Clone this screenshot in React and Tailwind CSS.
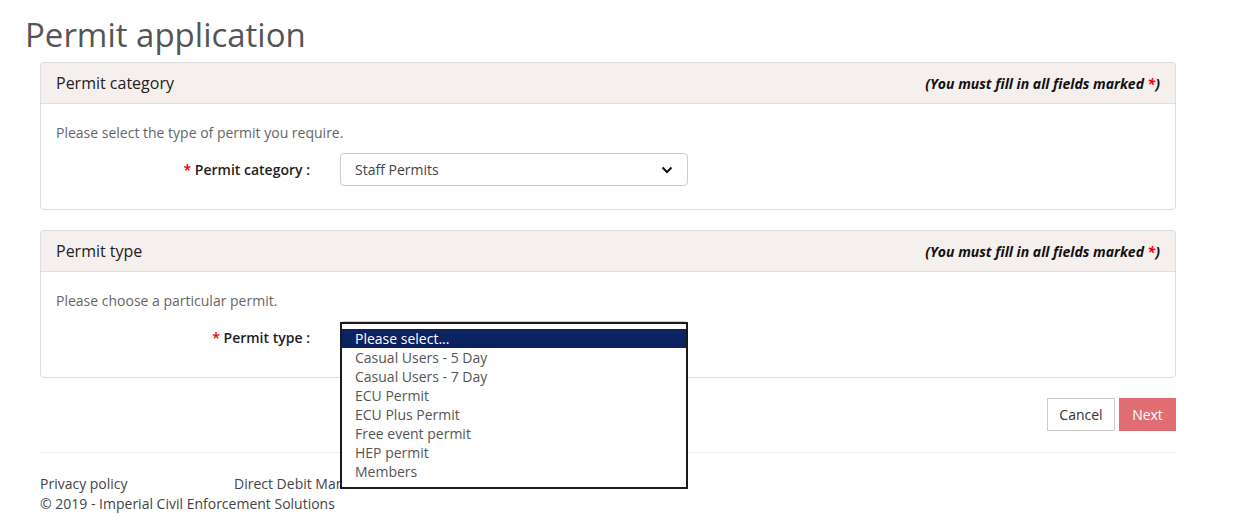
import React from "react";

function Panel({ title, desc, label, selectEl }) {
  return (
    <div className="border border-[#dddddd] rounded-[4px] bg-white">
      <div className="h-[41px] bg-[#f5f0ee] border-b border-[#dddddd] rounded-t-[4px] flex items-center justify-between px-[15px]">
        <span className="text-[16px] text-[#222]">{title}</span>
        <span className="text-[14px] font-bold italic text-[#111]">
          (You must fill in all fields marked <span className="text-[#e00]">*</span>)
        </span>
      </div>
      <div className="px-[15px] pt-[19px] pb-[23px]">
        <div className="text-[14px] leading-[20px] text-[#666]">{desc}</div>
        <div className="flex items-center mt-[10px]">
          <div className="w-[254px] text-right text-[14px] font-semibold text-[#222]">
            <span className="text-[#e00]">*</span> {label} :
          </div>
          <div className="ml-[30px] relative">{selectEl}</div>
        </div>
      </div>
    </div>
  );
}

export default function App() {
  const opts = [
    "Casual Users - 5 Day",
    "Casual Users - 7 Day",
    "ECU Permit",
    "ECU Plus Permit",
    "Free event permit",
    "HEP permit",
    "Members",
  ];
  return (
    <div className="w-[1242px] h-[516px] bg-white overflow-hidden font-['Open_Sans',sans-serif]">
      <h1 className="pl-[25px] pt-[12px] text-[33px] leading-[46px] text-[#555] font-normal">Permit application</h1>
      <div className="ml-[40px] w-[1136px] mt-[4px]">
        <Panel
          title="Permit category"
          desc="Please select the type of permit you require."
          label="Permit category"
          selectEl={
            <div className="w-[348px] h-[33px] border border-[#cccccc] rounded-[4px] flex items-center justify-between pl-[14px] pr-[14px] text-[14px] text-[#444]">
              <span>Staff Permits</span>
              <svg width="12" height="8" viewBox="0 0 12 8" fill="none">
                <path d="M1.5 1.5L6 6L10.5 1.5" stroke="#111" strokeWidth="2" />
              </svg>
            </div>
          }
        />
        <div className="h-[20px]" />
        <Panel
          title="Permit type"
          desc="Please choose a particular permit."
          label="Permit type"
          selectEl={
            <>
              <div className="w-[348px] h-[33px] border border-[#cccccc] rounded-[4px]" />
              <div className="absolute left-0 top-[1px] w-[348px] h-[167px] border-2 border-[#1a1a1a] bg-white pt-[5px] z-10">
                <div className="bg-[#0b2361] text-white text-[14px] leading-[19px] pl-[13px]">Please select...</div>
                {opts.map((o) => (
                  <div key={o} className="text-[14px] leading-[19px] text-[#555] pl-[13px]">{o}</div>
                ))}
              </div>
            </>
          }
        />
        <div className="flex justify-end gap-[4px] mt-[20px]">
          <button className="w-[68px] h-[33px] border border-[#cccccc] bg-white text-[14px] text-[#333]">Cancel</button>
          <button className="w-[57px] h-[33px] bg-[#e06d74] text-white text-[14px]">Next</button>
        </div>
        <div className="border-t border-[#eeeeee] mt-[21px]" />
        <div className="pt-[21px] text-[14px] leading-[20px] text-[#444]">
          <div className="flex">
            <span className="w-[194px]">Privacy policy</span>
            <span>Direct Debit Mandate</span>
          </div>
          <div>© 2019 - Imperial Civil Enforcement Solutions</div>
        </div>
      </div>
    </div>
  );
}
